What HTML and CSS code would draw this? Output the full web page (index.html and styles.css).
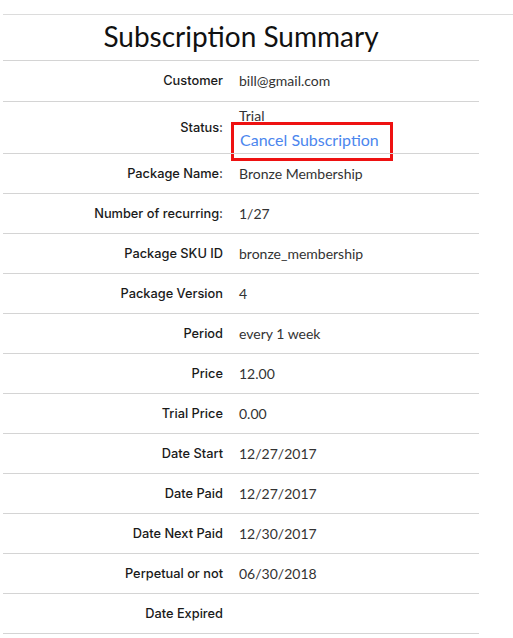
FILE: index.html
```html
<!DOCTYPE html>
<html>
<head>
<meta charset="utf-8">
<link rel="stylesheet" href="styles.css">
</head>
<body>
<div class="page">
  <div class="summary">
    <h1 class="title">Subscription Summary</h1>
    <table class="details">
      <tr><th>Customer</th><td>bill@gmail.com</td></tr>
      <tr class="status-row"><th>Status:</th><td class="status-cell"><div class="status">Trial</div><a class="cancel" href="#">Cancel Subscription</a></td></tr>
      <tr><th>Package Name:</th><td>Bronze Membership</td></tr>
      <tr><th>Number of recurring:</th><td>1/27</td></tr>
      <tr><th>Package SKU ID</th><td>bronze_membership</td></tr>
      <tr><th>Package Version</th><td>4</td></tr>
      <tr><th>Period</th><td>every 1 week</td></tr>
      <tr><th>Price</th><td>12.00</td></tr>
      <tr><th>Trial Price</th><td>0.00</td></tr>
      <tr><th>Date Start</th><td>12/27/2017</td></tr>
      <tr><th>Date Paid</th><td>12/27/2017</td></tr>
      <tr><th>Date Next Paid</th><td>12/30/2017</td></tr>
      <tr><th>Perpetual or not</th><td>06/30/2018</td></tr>
      <tr><th>Date Expired</th><td></td></tr>
    </table>
  </div>
</div>
</body>
</html>
```

FILE: styles.css
```css
html, body {
  margin: 0;
  padding: 0;
  background: #fff;
}
body {
  font-family: Lato, "Noto Sans", sans-serif;
  color: #222;
}
.page {
  margin-top: 14px;
  margin-left: 3px;
  border-top: 1px solid #dcdcdc;
}
.summary {
  width: 476px;
}
.title {
  margin: 0;
  height: 45px;
  line-height: 42px;
  text-align: center;
  font-size: 28px;
  font-weight: 400;
  color: #111;
  border-bottom: 1px solid #d4d4d4;
}
.details {
  width: 476px;
  border-collapse: collapse;
}
.details tr {
  height: 40px;
  border-bottom: 1px solid #d4d4d4;
}
.details th {
  width: 220px;
  padding: 0 8px 0 0;
  text-align: right;
  font-family: Inter, Lato, sans-serif;
  font-size: 12.8px;
  font-weight: 500;
  color: #1a1a1a;
}
.details td {
  padding: 0 0 0 8px;
  text-align: left;
  font-size: 14px;
  color: #333;
}
.details .status-row {
  height: 52px;
}
.details .status-cell {
  vertical-align: top;
  padding-top: 6px;
}
.status {
  line-height: 16px;
}
.cancel {
  display: block;
  width: fit-content;
  margin: -2px 0 -10px -8px;
  padding: 5px 11px 8px 6px;
  border: 3px solid #ee1111;
  color: #4b86ee;
  font-size: 16px;
  line-height: 20px;
  text-decoration: none;
}
```
